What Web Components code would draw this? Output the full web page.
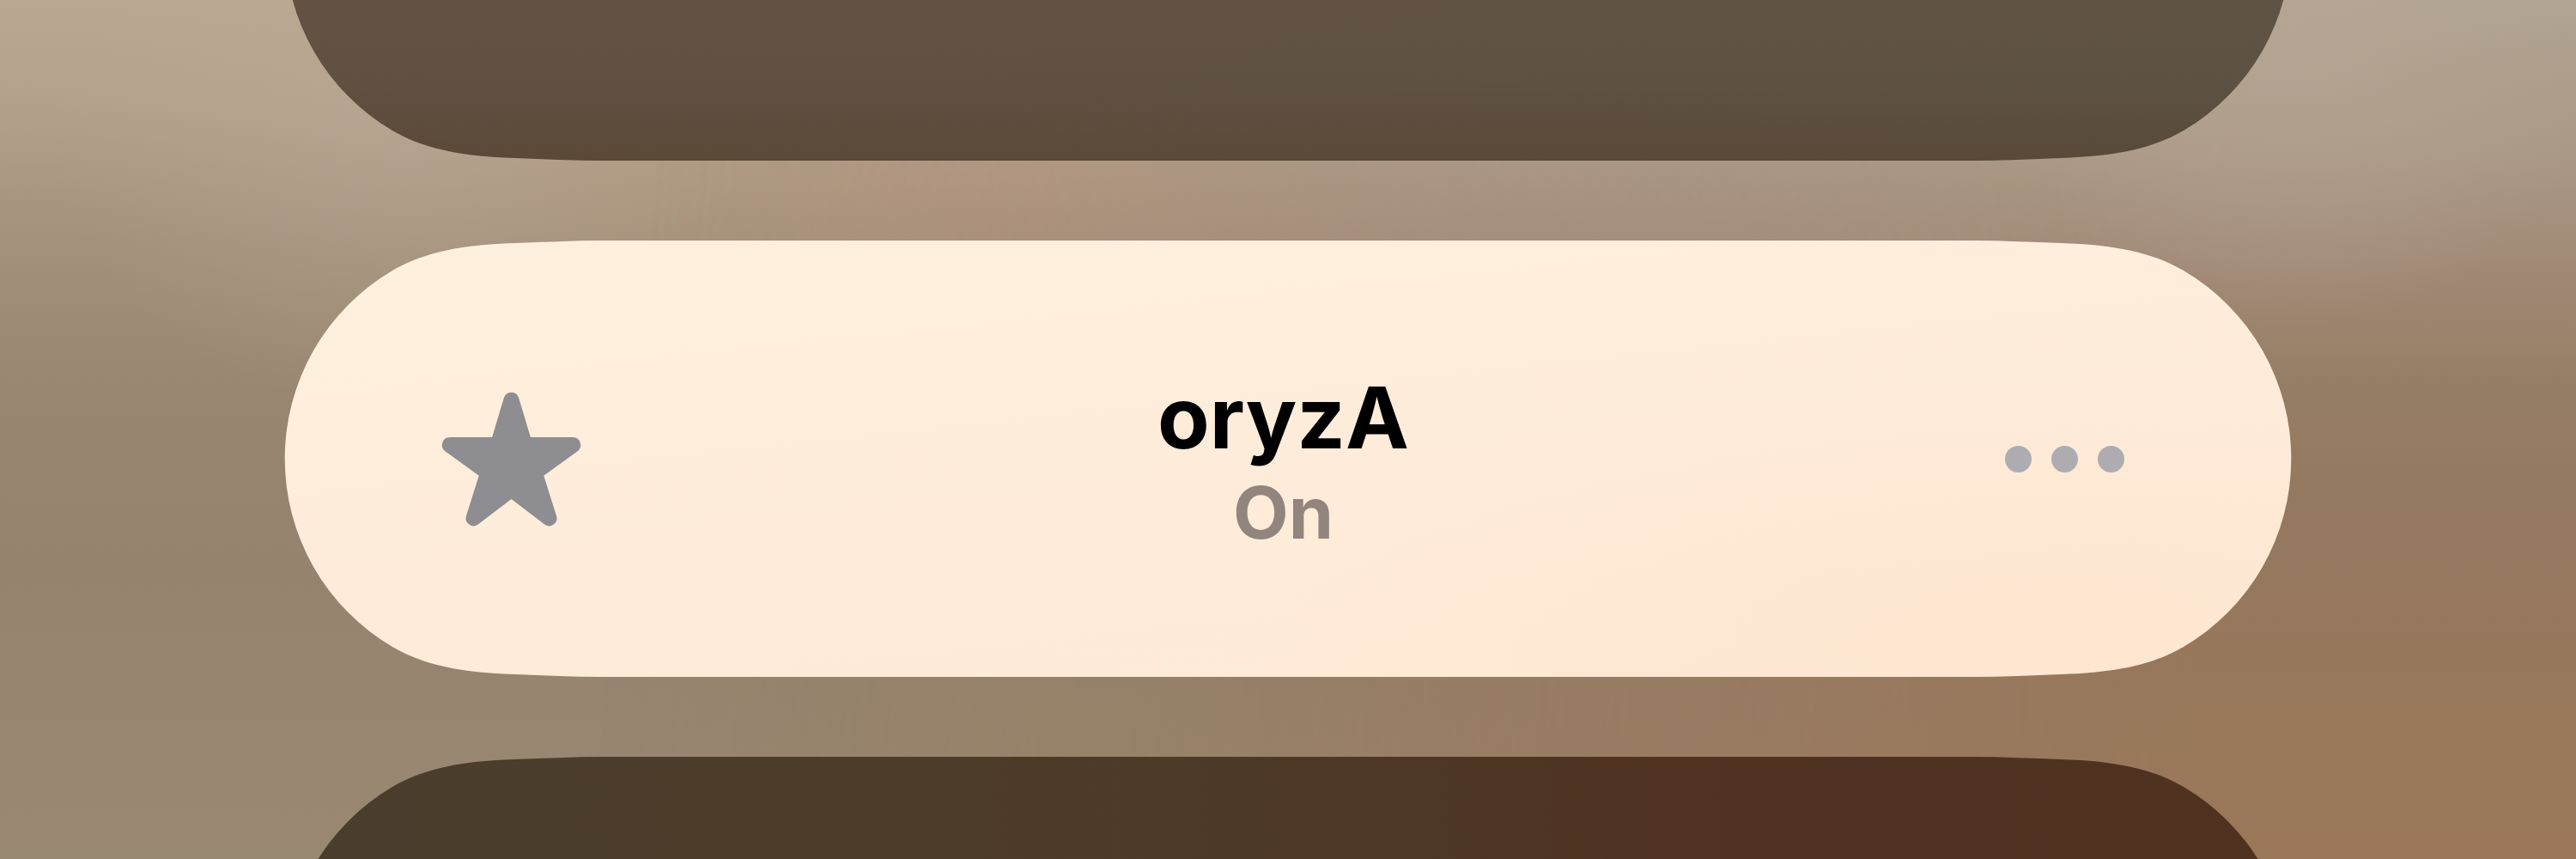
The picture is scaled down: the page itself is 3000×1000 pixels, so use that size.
<!DOCTYPE html>
<html lang="en">
<head>
<meta charset="utf-8">
<meta name="viewport" content="width=device-width, initial-scale=1">
<title>Focus</title>
<style>
html, body {
  margin: 0;
  height: 100%;
}
</style>
</head>
<body>
<focus-list>
  <focus-pill tone="upper"></focus-pill>
  <focus-pill tone="active">
    <star-icon slot="icon"></star-icon>
    <span slot="name">oryzA</span>
    <span slot="status">On</span>
    <more-button slot="action"></more-button>
  </focus-pill>
  <focus-pill tone="lower"></focus-pill>
</focus-list>

<script>
const listTemplate = document.createElement('template')
listTemplate.innerHTML = /* HTML */
`
<style>
:host {
  display: grid;
  grid-template-columns: minmax(0, 1fr);
  align-content: center;
  gap: 93px;
  box-sizing: border-box;
  height: 100vh;
  padding: 68px 331px 0;
  overflow: hidden;
  position: relative;
  isolation: isolate;
  font-family: Inter, "Liberation Sans", sans-serif;
  background:
    radial-gradient(ellipse 22% 24% at 38% 20%, #bd967d77, #bd967d00),
    radial-gradient(ellipse 30% 20% at 60% 28%, #ab8b8088, #ab8b8000),
    radial-gradient(ellipse 14% 34% at 16% 14%, #bcab9677, #bcab9600),
    linear-gradient(#b9a791 0%, #b3a18c 12%, #a3917c 28%, #988670 46%, #95836e 66%, #998872 100%);
}

/* warmer right side, faded in over the base */
:host::before {
  content: "";
  position: absolute;
  inset: 0;
  z-index: -1;
  background:
    radial-gradient(ellipse 12% 34% at 89% 4%, #b8a69699, #b8a69600),
    linear-gradient(#b0a492 0%, #a99984 18%, #a18875 32%, #967e65 45%, #937960 58%, #97775c 75%, #9a7759 100%);
  -webkit-mask: linear-gradient(95deg, transparent 25%, #000 85%);
  mask: linear-gradient(95deg, transparent 25%, #000 85%);
}
</style>
<slot></slot>
`

class FocusList extends HTMLElement {
  constructor () {
    super()
    this.attachShadow({ mode: 'open' })
    this.shadowRoot.appendChild(listTemplate.content.cloneNode(true))
  }
}

// end cap with a continuous corner, the right one is the same curve mirrored
const capCurve = 'M370 0C336 0 302 2 269 3C205 5 162 14 126 35A254 254 0 0 0 126 473C162 494 205 503 269 505C302 506 336 508 370 508Z'

function cap (transform) {
  const svg = `<svg xmlns='http://www.w3.org/2000/svg' width='370' height='508' viewBox='0 0 370 508'><path transform='${transform}' d='${capCurve}'/></svg>`
  return `url("data:image/svg+xml,${encodeURIComponent(svg)}")`
}

const shape = `
  ${cap('translate(0 0)')} left / 370px 100% no-repeat,
  ${cap('translate(370 0) scale(-1 1)')} right / 370px 100% no-repeat,
  linear-gradient(#000, #000) center / calc(100% - 738px) 100% no-repeat`

const pillTemplate = document.createElement('template')
pillTemplate.innerHTML = /* HTML */
`
<style>
:host {
  display: grid;
  grid-template-columns: 1fr auto 1fr;
  align-items: center;
  box-sizing: border-box;
  min-height: 508px;
  padding: 0 195px 0 184px;
  -webkit-mask: ${shape};
  mask: ${shape};
}
:host([tone="upper"]) {
  background: linear-gradient(92deg, #6b4d3a33, #55534322), linear-gradient(#625446 60%, #5e5143 82%, #584836 100%);
}
:host([tone="active"]) {
  background:
    radial-gradient(ellipse 40% 60% at 88% 92%, #ffe6d1, #ffe6d100),
    linear-gradient(174deg, #fff0dd 10%, #feecda 50%, #ffead5 100%);
}
:host([tone="lower"]) {
  background: linear-gradient(90deg, #4b3d2d 0%, #4c3e2b 20%, #4e3927 50%, #4f3523 62%, #503222 72%, #4e321f 100%);
}
.text {
  text-align: center;
  font-weight: 700;
}
.name {
  font-size: 99px;
  line-height: 126px;
  color: #000;
}
.status {
  font-size: 84px;
  line-height: 96px;
  color: #91857d;
}
.action {
  justify-self: end;
}
</style>
<div class="icon"><slot name="icon"></slot></div>
<div class="text">
  <div class="name"><slot name="name"></slot></div>
  <div class="status"><slot name="status"></slot></div>
</div>
<div class="action"><slot name="action"></slot></div>
`

class FocusPill extends HTMLElement {
  constructor () {
    super()
    this.attachShadow({ mode: 'open' })
    this.shadowRoot.appendChild(pillTemplate.content.cloneNode(true))
  }
}

const starTemplate = document.createElement('template')
starTemplate.innerHTML = /* HTML */
`
<style>
:host {
  display: block;
}
svg {
  display: block;
  overflow: visible;
  fill: #8e8d92;
}
</style>
<svg width="161" height="155" viewBox="0 0 482 464" aria-hidden="true">
  <path d="M174 156L215 19A27 27 0 0 1 267 19L308 156H455A27 27 0 0 1 471 205L354 290L398 429A27 27 0 0 1 356 459L241 371L126 459A27 27 0 0 1 84 429L128 290L11 205A27 27 0 0 1 27 156Z"/>
</svg>
`

class StarIcon extends HTMLElement {
  constructor () {
    super()
    this.attachShadow({ mode: 'open' })
    this.shadowRoot.appendChild(starTemplate.content.cloneNode(true))
  }
}

const moreTemplate = document.createElement('template')
moreTemplate.innerHTML = /* HTML */
`
<style>
:host {
  display: block;
}
button {
  display: flex;
  gap: 23px;
  padding: 0;
  border: 0;
  background: none;
  cursor: pointer;
}
i {
  width: 31px;
  height: 31px;
  border-radius: 50%;
  background: #aeacb1;
}
</style>
<button type="button" aria-label="More options"><i></i><i></i><i></i></button>
`

class MoreButton extends HTMLElement {
  constructor () {
    super()
    this.attachShadow({ mode: 'open' })
    this.shadowRoot.appendChild(moreTemplate.content.cloneNode(true))
  }
}

window.customElements.define('focus-list', FocusList)
window.customElements.define('focus-pill', FocusPill)
window.customElements.define('star-icon', StarIcon)
window.customElements.define('more-button', MoreButton)
</script>
</body>
</html>
